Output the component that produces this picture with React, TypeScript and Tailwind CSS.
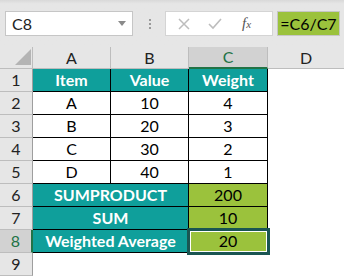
import React from "react";

const font = { fontFamily: "Lato, 'Liberation Sans', sans-serif" };

const hdr = "flex items-center justify-center bg-[#e6e6e6] text-[16px] text-[#222]";

function RowHeader({ n, sel }: { n: number; sel?: boolean }) {
  return (
    <div
      className={
        sel
          ? "flex items-center justify-center bg-[#d2d2d2] text-[16px] text-[#217346] border-b border-[#bdbdbd] border-r-2 border-r-[#217346]"
          : "flex items-center justify-center bg-[#e6e6e6] text-[16px] text-[#222] border-b border-[#bdbdbd] border-r border-r-[#9e9e9e]"
      }
    >
      {n}
    </div>
  );
}

const cell = "flex items-center justify-center bg-white text-[16px] text-black border-r border-b border-black";
const teal = "flex items-center justify-center bg-[#0f9f9b] text-[16px] font-bold text-white border-r border-b border-black";
const green = "flex items-center justify-center bg-[#9bc23c] text-[16px] text-black border-r border-b border-black";

export default function App() {
  const data = [
    ["A", "10", "4"],
    ["B", "20", "3"],
    ["C", "30", "2"],
    ["D", "40", "1"],
  ];
  return (
    <div className="w-[344px] h-[276px] bg-[#e6e6e6] overflow-hidden relative" style={font}>
      {/* formula bar */}
      <div className="h-[47px] bg-gradient-to-b from-[#d9d9d9] via-[#e6e6e6] to-[#e6e6e6] from-0% via-[8%] pt-[11px] flex items-start">
        <div className="ml-[5px] w-[128px] h-[25px] bg-white border border-[#c6c6c6] flex items-center justify-between pl-[6px] pr-[6px]">
          <span className="text-[16px] text-[#222]">C8</span>
          <svg width="8" height="5" viewBox="0 0 8 5"><path d="M0 0H8L4 5Z" fill="#8a8a8a" /></svg>
        </div>
        <div className="ml-[16px] mt-[8px] flex flex-col gap-[2px]">
          <div className="w-[2px] h-[2px] bg-[#9a9a9a]" />
          <div className="w-[2px] h-[2px] bg-[#9a9a9a]" />
          <div className="w-[2px] h-[2px] bg-[#9a9a9a]" />
        </div>
        <div className="ml-[14px] w-[108px] h-[25px] bg-white border border-[#d4d4d4] flex items-center">
          <svg className="ml-[12px]" width="12" height="12" viewBox="0 0 12 12"><path d="M1 1L11 11M11 1L1 11" stroke="#bdbdbd" strokeWidth="1.5" /></svg>
          <svg className="ml-[18px]" width="14" height="12" viewBox="0 0 14 12"><path d="M1 6L5 10L13 1" stroke="#bdbdbd" strokeWidth="1.6" fill="none" /></svg>
          <span className="ml-[20px] text-[15px] italic text-[#555]" style={{ fontFamily: "'Liberation Serif', serif" }}>
            f<span className="text-[11px]">x</span>
          </span>
        </div>
        <div className="ml-[4px] w-[63px] h-[25px] bg-[#9bc23c] border border-[#c6c6c6] flex items-center justify-center text-[16px] text-black">
          =C6/C7
        </div>
      </div>

      {/* sheet */}
      <div className="grid grid-cols-[33px_78px_78px_79px_76px] grid-rows-[22px_repeat(9,23px)]">
        {/* corner */}
        <div className="bg-[#e6e6e6] border-r border-b border-[#bdbdbd] flex items-end justify-end pr-[1px] pb-[3px]">
          <svg width="16" height="16" viewBox="0 0 16 16"><path d="M16 0V16H0Z" fill="#b4b4b4" /></svg>
        </div>
        <div className={hdr + " border-r border-b border-[#bdbdbd]"}>A</div>
        <div className={hdr + " border-r border-b border-[#bdbdbd]"}>B</div>
        <div className="flex items-center justify-center bg-[#d2d2d2] text-[16px] text-[#217346] border-r border-[#bdbdbd] border-b-2 border-b-[#217346]">C</div>
        <div className={hdr + " border-b border-[#bdbdbd]"}>D</div>

        {/* row 1 */}
        <RowHeader n={1} />
        <div className={teal}>Item</div>
        <div className={teal}>Value</div>
        <div className={teal}>Weight</div>
        <div className="bg-white" />

        {data.map((r, i) => (
          <React.Fragment key={i}>
            <RowHeader n={i + 2} />
            <div className={cell}>{r[0]}</div>
            <div className={cell}>{r[1]}</div>
            <div className={cell}>{r[2]}</div>
            <div className="bg-white" />
          </React.Fragment>
        ))}

        <RowHeader n={6} />
        <div className={teal + " col-span-2"}>SUMPRODUCT</div>
        <div className={green}>200</div>
        <div className="bg-white" />

        <RowHeader n={7} />
        <div className={teal + " col-span-2"}>SUM</div>
        <div className={green}>10</div>
        <div className="bg-white" />

        <RowHeader n={8} sel />
        <div className={teal + " col-span-2"}>Weighted Average</div>
        <div className={green + " relative"}>
          20
          <div className="absolute left-[-2px] top-[-2px] right-[-3px] bottom-[-3px] border-[3px] border-[#1a5552]">
            <div className="w-full h-full border border-white" />
          </div>
        </div>
        <div className="bg-white" />

        <RowHeader n={9} />
        <div className="bg-white" />
        <div className="bg-white" />
        <div className="bg-white" />
        <div className="bg-white" />
      </div>
    </div>
  );
}
